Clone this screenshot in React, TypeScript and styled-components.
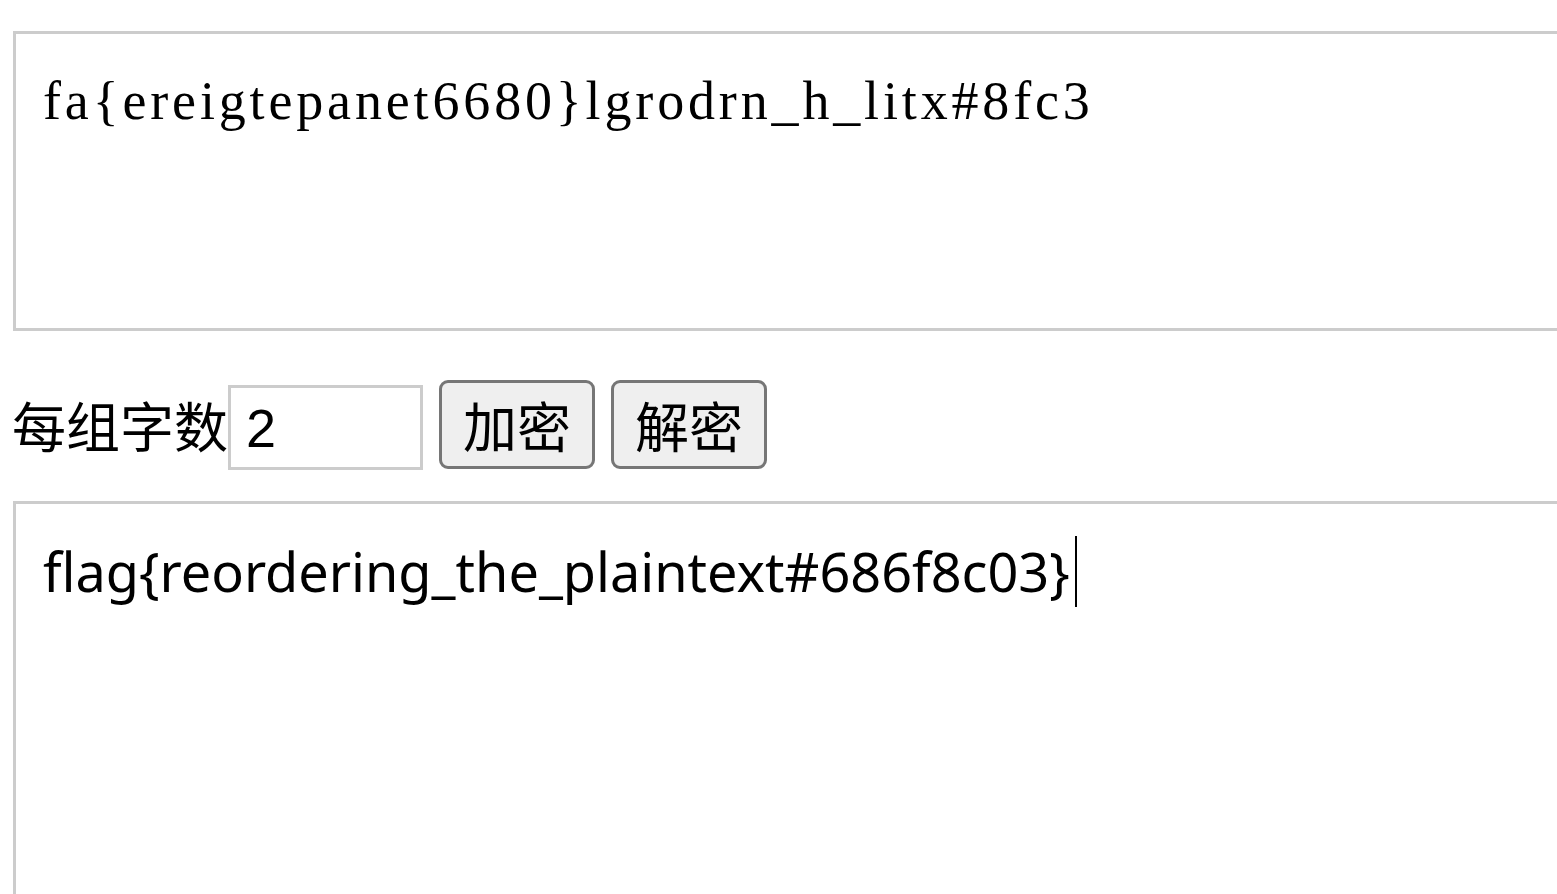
import React, { useEffect, useState } from "react";
import styled, { createGlobalStyle } from "styled-components";

const Global = createGlobalStyle`
  html, body { margin: 0; padding: 0; overflow: hidden; background: #fff; }
`;

const Page = styled.div`
  padding: 31px 0 0 13px;
  font-family: "Noto Sans CJK SC", sans-serif;
`;

const Area = styled.textarea<{ $serif?: boolean; $tall?: boolean }>`
  display: block;
  box-sizing: border-box;
  width: 1600px;
  height: ${(p) => (p.$tall ? "450px" : "300px")};
  border: 3px solid #ccc;
  padding: 32px 27px;
  margin: 0;
  resize: none;
  outline: none;
  color: #000;
  caret-color: transparent;
  background: #fff;
  font-family: ${(p) => (p.$serif ? '"Liberation Serif", serif' : '"Noto Sans", sans-serif')};
  font-size: 54px;
  letter-spacing: ${(p) => (p.$serif ? "3.85px" : "0")};
  line-height: 71px;
`;

const Row = styled.div`
  display: flex;
  align-items: flex-start;
  height: 90px;
  margin: 49px 0 31px;
`;

const Label = styled.span`
  font-size: 54px;
  line-height: 90px;
  color: #000;
  margin-left: -1px;
`;

const NumInput = styled.input`
  box-sizing: border-box;
  width: 195px;
  height: 85px;
  margin: 5px 16px 0 0;
  border: 3px solid #ccc;
  padding: 0 15px;
  font-family: "Liberation Sans", Arial, sans-serif;
  font-size: 54px;
  color: #000;
  outline: none;
`;

const Btn = styled.button`
  box-sizing: border-box;
  height: 89px;
  padding: 0 21px;
  margin-right: 16px;
  border: 3px solid #767676;
  border-radius: 9px;
  background: #efefef;
  color: #000;
  font-family: "Noto Sans CJK SC", sans-serif;
  font-size: 54px;
  line-height: 1;
`;

const Output = styled.div`
  position: relative;
`;

const Caret = styled.span`
  position: absolute;
  top: 35px;
  width: 2px;
  height: 71px;
  background: #000;
`;

const S2 = "flag{reordering_the_plaintext#686f8c03}";
const S1 = "fa{ereigtepanet6680}lgrodrn_h_litx#8fc3";

export default function App() {
  const [caretX, setCaretX] = useState(1063);
  useEffect(() => {
    document.fonts.ready.then(() => {
      const c = document.createElement("canvas").getContext("2d");
      if (!c) return;
      c.font = '54px "Noto Sans"';
      setCaretX(Math.round(3 + 27 + c.measureText(S2).width) + 5);
    });
  }, []);
  return (
    <Page>
      <Global />
      <Area $serif defaultValue={S1} spellCheck={false} />
      <Row>
        <Label>每组字数</Label>
        <NumInput defaultValue="2" />
        <Btn>加密</Btn>
        <Btn>解密</Btn>
      </Row>
      <Output>
        <Area $tall defaultValue={S2} spellCheck={false} />
        <Caret style={{ left: caretX }} />
      </Output>
    </Page>
  );
}
